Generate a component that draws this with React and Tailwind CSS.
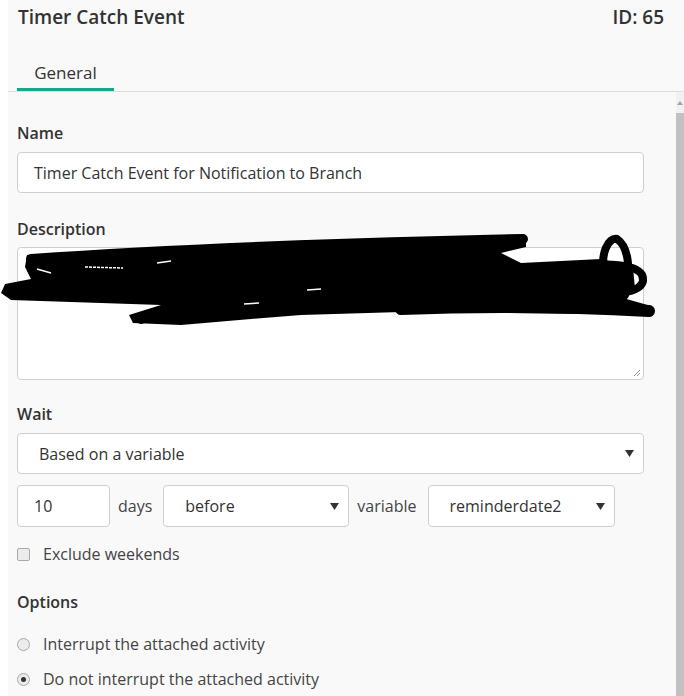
import React from 'react'

const font = { fontFamily: '"Open Sans", "Liberation Sans", sans-serif' }

function Caret() {
  return (
    <svg width="9" height="7" viewBox="0 0 9 7" className="shrink-0">
      <path d="M0 0 H9 L4.5 7 Z" fill="#333" />
    </svg>
  )
}

function Select({ value, className }) {
  return (
    <div className={`flex items-center justify-between bg-white border border-[#cfcfcf] rounded-[4px] pl-[21px] pr-[9px] text-[16px] text-[#333] ${className}`}>
      <span>{value}</span>
      <Caret />
    </div>
  )
}

function Scribble() {
  return (
    <svg
      className="absolute left-[-17px] top-[-17px] pointer-events-none"
      width="684"
      height="100"
      viewBox="0 230 684 100"
    >
      <polygon
        fill="#000"
        points="26,254 150,247 330,244 440,236 525,237 525,246 500,252 520,262 600,258 632,266 634,288 622,297 650,305 652,314 600,313 400,311 300,314 250,318 180,324 132,322 128,314 160,304 100,302 10,299 0,292 4,283 30,278 24,266"
      />
      <g fill="none" stroke="#000" strokeLinecap="round" strokeLinejoin="round">
        <path d="M30 258 Q 200 246 440 240 L 522 238" strokeWidth="10" />
        <path d="M604 276 C 598 252 608 236 616 238 C 628 246 630 270 624 294" strokeWidth="8" />
        <path d="M590 264 C 620 262 644 266 642 280 C 640 290 620 294 600 292" strokeWidth="8" />
        <path d="M140 318 Q 160 306 250 306" strokeWidth="10" />
        <path d="M400 308 Q 520 303 648 310" strokeWidth="12" />
      </g>
      <g stroke="#fff" strokeWidth="1.5" fill="none">
        <path d="M84 266 L 122 267" strokeDasharray="3 1" />
        <path d="M36 268 L 50 272" />
        <path d="M156 262 L 170 260" />
        <path d="M306 289 L 320 288" />
        <path d="M612 254 L 619 258" />
        <path d="M243 303 L 258 302" />
      </g>
    </svg>
  )
}

export default function App() {
  return (
    <div className="w-[684px] h-[696px] flex bg-white overflow-hidden text-[#333]" style={font}>
      <div className="w-[8px] shrink-0 bg-white" />
      <div className="flex-1 flex flex-col bg-[#f9f9f9]">
        <div className="h-[35px] flex items-center justify-between pl-[10px] pr-[20px] shrink-0">
          <h1 className="text-[19px] font-semibold text-[#333]">Timer Catch Event</h1>
          <span className="text-[19px] font-semibold text-[#333]">ID: 65</span>
        </div>
        <div className="h-[57px] shrink-0 flex items-end border-b border-[#dcdcdc]">
          <div className="ml-[9px] w-[97px] h-[36px] pt-[5px] flex items-start justify-center border-b-[3px] border-[#1ba68b] text-[17px] font-normal text-[#333]">
            General
          </div>
        </div>
        <div className="flex-1 flex min-h-0">
          <div className="flex-1 pl-[9px] pr-[32px] pt-[31px] flex flex-col">
            <label className="text-[16px] font-semibold leading-[20px]">Name</label>
            <div className="mt-[9px] h-[41px] bg-white border border-[#cfcfcf] rounded-[4px] flex items-center pl-[16px] text-[16px] text-[#333]">
              Timer Catch Event for Notification to Branch
            </div>

            <label className="mt-[26px] text-[16px] font-semibold leading-[20px]">Description</label>
            <div className="relative mt-[8px] h-[133px] bg-white border border-[#cfcfcf] rounded-[4px]">
              <svg className="absolute right-[2px] bottom-[2px]" width="8" height="8" viewBox="0 0 8 8">
                <path d="M1 7 L7 1 M4 7 L7 4" stroke="#999" strokeWidth="1" />
              </svg>
              <Scribble />
            </div>

            <label className="mt-[24px] text-[16px] font-semibold leading-[20px]">Wait</label>
            <Select value="Based on a variable" className="mt-[9px] h-[41px] pr-[8px]" />

            <div className="mt-[11px] flex items-center h-[42px]">
              <div className="w-[93px] h-[42px] bg-white border border-[#cfcfcf] rounded-[4px] flex items-center pl-[16px] text-[16px]">
                10
              </div>
              <span className="ml-[8px] text-[16px] text-[#444]">days</span>
              <Select value="before" className="ml-[11px] w-[186px] h-[42px]" />
              <span className="ml-[8px] text-[16px] text-[#444]">variable</span>
              <Select value="reminderdate2" className="ml-[11px] w-[187px] h-[42px]" />
            </div>

            <div className="mt-[17px] flex items-center h-[20px]">
              <span className="w-[13px] h-[13px] rounded-[2px] border border-[#a8a8a8] bg-[#ececec]" />
              <span className="ml-[13px] text-[16px] text-[#444]">Exclude weekends</span>
            </div>

            <label className="mt-[28px] text-[16px] font-semibold leading-[20px]">Options</label>

            <div className="mt-[22px] flex items-center h-[20px]">
              <span className="w-[13px] h-[13px] rounded-full border border-[#a8a8a8] bg-[#ececec]" />
              <span className="ml-[13px] text-[16px] text-[#444]">Interrupt the attached activity</span>
            </div>
            <div className="mt-[15px] flex items-center h-[20px]">
              <span className="w-[13px] h-[13px] rounded-full border border-[#a8a8a8] bg-[#ececec] flex items-center justify-center">
                <span className="w-[5px] h-[5px] rounded-full bg-[#333]" />
              </span>
              <span className="ml-[13px] text-[16px] text-[#444]">Do not interrupt the attached activity</span>
            </div>
          </div>
          <div className="w-[8px] shrink-0 flex flex-col bg-[#f1f1f1]">
            <div className="h-[21px] flex items-center justify-center">
              <svg width="6" height="4" viewBox="0 0 6 4">
                <path d="M0 4 L3 0 L6 4 Z" fill="#a3a3a3" />
              </svg>
            </div>
            <div className="flex-1 bg-[#c1c1c1]" />
          </div>
        </div>
      </div>
    </div>
  )
}
